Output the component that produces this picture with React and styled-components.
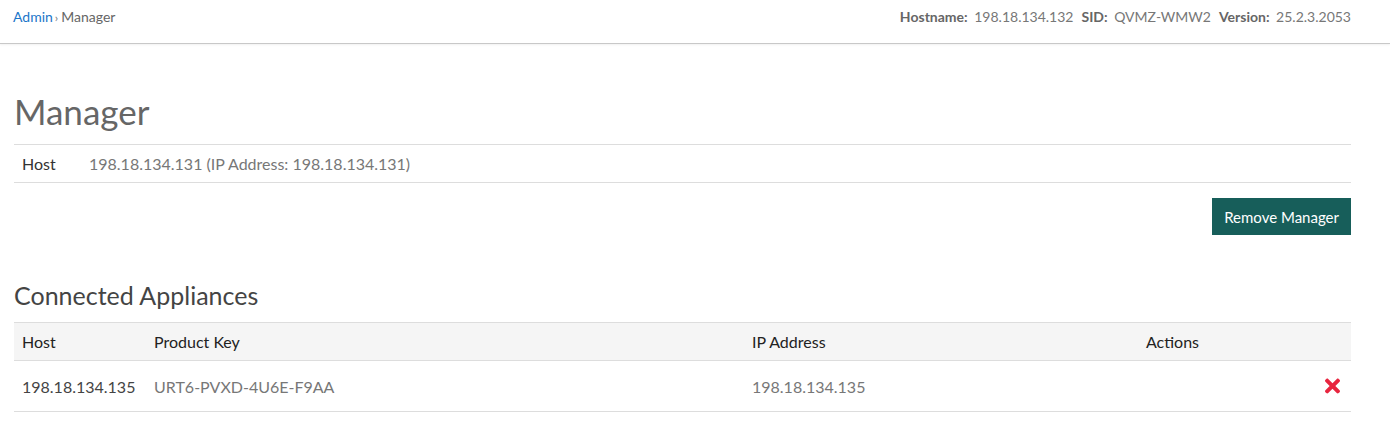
import React from 'react';
import styled, { createGlobalStyle } from 'styled-components';
import { FaTimes } from 'react-icons/fa';

const GlobalStyle = createGlobalStyle`
  body {
    margin: 0;
    background: #fff;
    font-family: Lato, "Liberation Sans", sans-serif;
    color: #333;
  }
`;

const appliances = [
  { host: '198.18.134.135', key: 'URT6-PVXD-4U6E-F9AA', ip: '198.18.134.135' },
];

const TopBar = styled.header`
  box-sizing: border-box;
  height: 44px;
  display: flex;
  align-items: flex-start;
  justify-content: space-between;
  padding: 8px 39px 0 13px;
  border-bottom: 1px solid #c8c8c8;
  box-shadow: 0 1px 2px rgba(0, 0, 0, 0.06);
  font-size: 14px;
  line-height: 18px;
`;

const Crumbs = styled.nav`
  color: #666;
  a {
    color: #1b76c9;
    text-decoration: none;
  }
`;

const Sep = styled.span`
  margin: 0 3px 0 2px;
  font-size: 12px;
  color: #777;
`;

const SysInfo = styled.div`
  display: flex;
  gap: 8px;
  color: #777;
`;

const Label = styled.b`
  color: #666;
  margin-right: 3px;
`;

const Main = styled.main`
  padding: 48px 39px 0 14px;
`;

const Title = styled.h1`
  margin: 0 0 14px;
  font-size: 35px;
  font-weight: 400;
  line-height: 38px;
  color: #666;
`;

const InfoRow = styled.div`
  display: flex;
  height: 37px;
  align-items: center;
  border-top: 1px solid #ddd;
  border-bottom: 1px solid #ddd;
  font-size: 16px;
`;

const InfoLabel = styled.span`
  width: 67px;
  padding-left: 8px;
  color: #333;
`;

const InfoValue = styled.span`
  color: #777;
`;

const Actions = styled.div`
  display: flex;
  justify-content: flex-end;
  margin-top: 15px;
`;

const Button = styled.button`
  height: 37px;
  padding: 0 12px;
  border: none;
  border-radius: 0;
  background: #175e5a;
  color: #fff;
  font-family: inherit;
  font-size: 15px;
  cursor: pointer;
`;

const SectionTitle = styled.h2`
  margin: 46px 0 13px;
  font-size: 25px;
  font-weight: 400;
  line-height: 28px;
  color: #444;
`;

const Grid = styled.div`
  display: grid;
  grid-template-columns: 132px 598px 394px 213px;
  font-size: 16px;
`;

const HeadCell = styled.div`
  height: 37px;
  display: flex;
  align-items: center;
  padding-left: 8px;
  background: #f5f5f5;
  border-top: 1px solid #ddd;
  border-bottom: 1px solid #ddd;
  color: #222;
`;

const Cell = styled.div`
  height: 50px;
  display: flex;
  align-items: center;
  padding-left: 8px;
  border-bottom: 1px solid #ddd;
  color: ${p => (p.muted ? '#777' : '#444')};
  justify-content: ${p => (p.end ? 'flex-end' : 'flex-start')};
  padding-right: ${p => (p.end ? '11px' : '0')};
`;

const Remove = styled(FaTimes)`
  color: #e8253f;
  width: 15px;
  height: 22px;
  cursor: pointer;
`;

export default function App() {
  return (
    <>
      <GlobalStyle />
      <TopBar>
        <Crumbs>
          <a href="#">Admin</a>
          <Sep>›</Sep>
          Manager
        </Crumbs>
        <SysInfo>
          <span><Label>Hostname:</Label> 198.18.134.132</span>
          <span><Label>SID:</Label> QVMZ-WMW2</span>
          <span><Label>Version:</Label> 25.2.3.2053</span>
        </SysInfo>
      </TopBar>
      <Main>
        <Title>Manager</Title>
        <InfoRow>
          <InfoLabel>Host</InfoLabel>
          <InfoValue>198.18.134.131 (IP Address: 198.18.134.131)</InfoValue>
        </InfoRow>
        <Actions>
          <Button>Remove Manager</Button>
        </Actions>
        <SectionTitle>Connected Appliances</SectionTitle>
        <Grid>
          <HeadCell>Host</HeadCell>
          <HeadCell>Product Key</HeadCell>
          <HeadCell>IP Address</HeadCell>
          <HeadCell>Actions</HeadCell>
          {appliances.map(a => (
            <React.Fragment key={a.host}>
              <Cell>{a.host}</Cell>
              <Cell muted>{a.key}</Cell>
              <Cell muted>{a.ip}</Cell>
              <Cell end>
                <Remove />
              </Cell>
            </React.Fragment>
          ))}
        </Grid>
      </Main>
    </>
  );
}
